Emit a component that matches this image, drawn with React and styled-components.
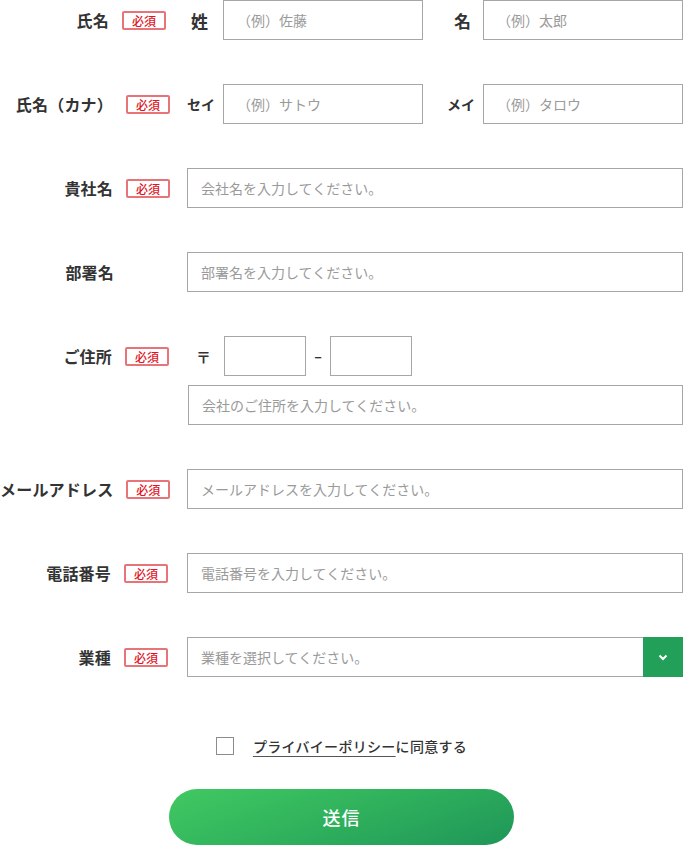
import styled, { createGlobalStyle } from "styled-components";

const GlobalStyle = createGlobalStyle`
  body {
    margin: 0;
    background: #ffffff;
    font-family: "Noto Sans CJK JP", "Noto Sans", sans-serif;
    color: #333333;
  }
  * { box-sizing: border-box; }
`;

const Form = styled.form`
  width: 683px;
  display: flex;
  flex-direction: column;
  gap: 44px;
`;

const Row = styled.div`
  display: flex;
  align-items: flex-start;
`;

const LabelCell = styled.div`
  width: 187px;
  height: 40px;
  flex-shrink: 0;
  display: flex;
  align-items: center;
  justify-content: flex-end;
  gap: 13px;
  padding-right: ${(p) => p.$pad ?? 17}px;
`;

const Label = styled.span`
  font-size: 16px;
  font-weight: 700;
  color: #333;
  white-space: nowrap;
  letter-spacing: 0.2px;
`;

const Badge = styled.span`
  width: 44px;
  height: 19px;
  border: 2px solid #e8747a;
  border-radius: 2px;
  color: #e0151f;
  font-size: 12px;
  font-weight: 500;
  line-height: 15px;
  text-align: center;
`;

const Field = styled.div`
  flex: 1;
  display: flex;
  align-items: center;
`;

const Input = styled.input`
  width: ${(p) => p.$w || "100%"};
  height: 40px;
  border: 1px solid #a6a6a6;
  border-radius: 0;
  padding: 0 13px;
  font-family: inherit;
  font-size: 14px;
  color: #333;
  background: #fff;
  outline: none;
  &::placeholder {
    color: #9a9a9a;
  }
`;

const SubLabel = styled.span`
  width: ${(p) => p.$w}px;
  flex-shrink: 0;
  text-align: ${(p) => p.$align};
  padding: 0 ${(p) => p.$pr || 0}px 0 ${(p) => p.$pl || 0}px;
  font-size: ${(p) => p.$size}px;
  font-weight: 700;
  color: #333;
`;

const AddressBlock = styled.div`
  flex: 1;
  display: flex;
  flex-direction: column;
  gap: 9px;
`;

const ZipLine = styled.div`
  display: flex;
  align-items: center;
  height: 40px;
`;

const ZipMark = styled.span`
  width: 37px;
  padding-left: 9px;
  font-size: 15px;
  font-weight: 700;
  color: #333;
`;

const Dash = styled.span`
  width: 24px;
  text-align: center;
  font-size: 14px;
  font-weight: 700;
  color: #333;
`;

const AddressInput = styled(Input)`
  margin-left: 1px;
  width: calc(100% - 1px);
`;

const SelectBox = styled.div`
  flex: 1;
  height: 40px;
  border: 1px solid #a6a6a6;
  display: flex;
  align-items: center;
`;

const SelectText = styled.span`
  flex: 1;
  padding-left: 13px;
  font-size: 14px;
  color: #9a9a9a;
`;

const SelectButton = styled.span`
  width: 40px;
  height: 40px;
  margin: -1px -1px -1px 0;
  background: #22a05a;
  display: flex;
  align-items: center;
  justify-content: center;
`;

const AgreeRow = styled.label`
  margin-top: 15px;
  display: flex;
  align-items: center;
  justify-content: center;
  gap: 19px;
  font-size: 14px;
  color: #333;
`;

const Checkbox = styled.span`
  width: 18px;
  height: 18px;
  border: 1px solid #8c8c8c;
  background: #fff;
`;

const AgreeText = styled.span`
  font-weight: 500;
  letter-spacing: 0.3px;
`;

const Link = styled.span`
  text-decoration: underline;
  text-underline-offset: 4px;
  text-decoration-color: #555;
`;

const SubmitWrap = styled.div`
  display: flex;
  justify-content: center;
  margin-top: -11px;
`;

const Submit = styled.button`
  width: 345px;
  height: 56px;
  border: none;
  border-radius: 28px;
  background: linear-gradient(160deg, #41c962 0%, #2fb15c 50%, #1f9659 100%);
  color: #fff;
  font-family: inherit;
  font-size: 18px;
  font-weight: 500;
  letter-spacing: 1px;
  cursor: pointer;
`;

const Req = () => <Badge>必須</Badge>;

const App = () => {
  return (
    <>
      <GlobalStyle />
      <Form onSubmit={(e) => e.preventDefault()}>
        <Row>
          <LabelCell $pad={21}>
            <Label>氏名</Label>
            <Req />
          </LabelCell>
          <Field>
            <SubLabel $w={36} $align="left" $pl={4} $size={17}>姓</SubLabel>
            <Input $w="200px" placeholder="（例）佐藤" />
            <SubLabel $w={60} $align="right" $pr={12} $size={17}>名</SubLabel>
            <Input $w="200px" placeholder="（例）太郎" />
          </Field>
        </Row>

        <Row>
          <LabelCell>
            <Label>氏名（カナ）</Label>
            <Req />
          </LabelCell>
          <Field>
            <SubLabel $w={36} $align="left" $size={14}>セイ</SubLabel>
            <Input $w="200px" placeholder="（例）サトウ" />
            <SubLabel $w={60} $align="right" $pr={8} $size={14}>メイ</SubLabel>
            <Input $w="200px" placeholder="（例）タロウ" />
          </Field>
        </Row>

        <Row>
          <LabelCell>
            <Label>貴社名</Label>
            <Req />
          </LabelCell>
          <Field>
            <Input placeholder="会社名を入力してください。" />
          </Field>
        </Row>

        <Row>
          <LabelCell $pad={73}>
            <Label>部署名</Label>
          </LabelCell>
          <Field>
            <Input placeholder="部署名を入力してください。" />
          </Field>
        </Row>

        <Row>
          <LabelCell $pad={18}>
            <Label>ご住所</Label>
            <Req />
          </LabelCell>
          <AddressBlock>
            <ZipLine>
              <ZipMark>〒</ZipMark>
              <Input $w="82px" />
              <Dash>–</Dash>
              <Input $w="82px" />
            </ZipLine>
            <AddressInput placeholder="会社のご住所を入力してください。" />
          </AddressBlock>
        </Row>

        <Row>
          <LabelCell>
            <Label>メールアドレス</Label>
            <Req />
          </LabelCell>
          <Field>
            <Input placeholder="メールアドレスを入力してください。" />
          </Field>
        </Row>

        <Row>
          <LabelCell $pad={19}>
            <Label>電話番号</Label>
            <Req />
          </LabelCell>
          <Field>
            <Input placeholder="電話番号を入力してください。" />
          </Field>
        </Row>

        <Row>
          <LabelCell $pad={19}>
            <Label>業種</Label>
            <Req />
          </LabelCell>
          <SelectBox>
            <SelectText>業種を選択してください。</SelectText>
            <SelectButton>
              <svg width="10" height="7" viewBox="0 0 10 7">
                <path d="M1.5 1.5 L5 5 L8.5 1.5" fill="none" stroke="#fff" strokeWidth="2" />
              </svg>
            </SelectButton>
          </SelectBox>
        </Row>

        <AgreeRow>
          <Checkbox />
          <AgreeText>
            <Link>プライバイーポリシー</Link>に同意する
          </AgreeText>
        </AgreeRow>

        <SubmitWrap>
          <Submit type="submit">送信</Submit>
        </SubmitWrap>
      </Form>
    </>
  );
};

export default App;
